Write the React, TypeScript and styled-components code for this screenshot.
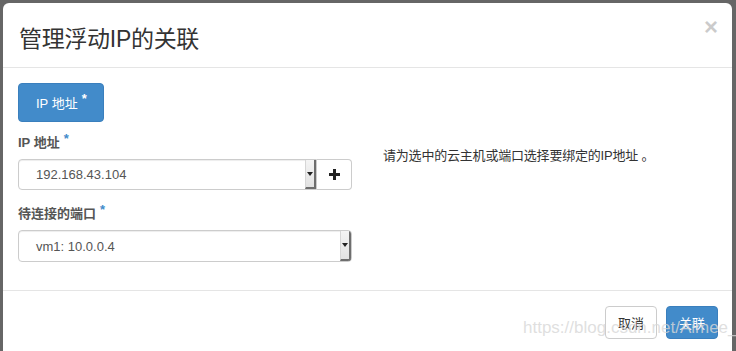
import styled, { createGlobalStyle } from 'styled-components'

const GlobalStyle = createGlobalStyle`
  html, body {
    margin: 0;
    padding: 0;
    background: #666;
    overflow: hidden;
  }
  body {
    font-family: "Liberation Sans", "Noto Sans CJK SC", sans-serif;
    font-size: 13px;
    color: #333;
  }
`

const Backdrop = styled.div`
  width: 736px;
  height: 351px;
  padding: 3px 4px 0 3px;
  box-sizing: border-box;
`

const Modal = styled.div`
  position: relative;
  height: 100%;
  background: #fff;
  border-radius: 6px 6px 0 0;
  display: flex;
  flex-direction: column;
`

const Header = styled.div`
  height: 64px;
  flex: none;
  display: flex;
  align-items: center;
  justify-content: space-between;
  padding: 0 14px 0 16px;
  border-bottom: 1px solid #e5e5e5;
`

const Title = styled.h4`
  margin: 0;
  font-size: 23px;
  font-weight: normal;
  color: #333;
  letter-spacing: -0.3px;
  padding-top: 4px;
`

const Close = styled.button`
  border: 0;
  background: none;
  padding: 0;
  font-family: "Liberation Sans", sans-serif;
  font-size: 24px;
  font-weight: bold;
  line-height: 1;
  color: #000;
  opacity: 0.2;
  margin-top: -16px;
`

const Body = styled.div`
  height: 223px;
  flex: none;
  padding: 15px 15px 0 15px;
  box-sizing: border-box;
  border-bottom: 1px solid #e5e5e5;
`

const Star = styled.span`
  color: #428bca;
  font-size: 13px;
  vertical-align: top;
  margin-left: 4px;
  font-weight: bold;
`

const TabButton = styled.button`
  height: 39px;
  padding: 0 16px 0 17px;
  border: 1px solid #3a7fbd;
  border-radius: 4px;
  background: #428bca;
  color: #fff;
  font-family: "Liberation Sans", "Noto Sans CJK SC", sans-serif;
  font-size: 13px;
  display: flex;
  align-items: center;
  ${Star} {
    color: #fff;
    margin-top: -8px;
  }
`

const Row = styled.div`
  display: flex;
  gap: 31px;
  margin-top: 13px;
`

const FormCol = styled.div`
  width: 334px;
  display: flex;
  flex-direction: column;
`

const Label = styled.label`
  display: block;
  font-weight: bold;
  color: #555;
  font-size: 13px;
  height: 16px;
  line-height: 16px;
  margin-bottom: 8px;
  ${Star} {
    display: inline-block;
    margin-top: -4px;
  }
`

const Group = styled.div<{ $gap?: number }>`
  margin-bottom: ${(p) => p.$gap ?? 0}px;
`

const InputGroup = styled.div`
  display: flex;
  height: 31px;
`

const Select = styled.div<{ $height: number; $joined?: boolean }>`
  flex: 1;
  height: ${(p) => p.$height}px;
  box-sizing: border-box;
  border: 1px solid #ccc;
  border-radius: ${(p) => (p.$joined ? '4px 0 0 4px' : '4px')};
  display: flex;
  align-items: stretch;
  overflow: hidden;
  box-shadow: inset 0 1px 1px rgba(0, 0, 0, 0.075);
`

const SelectValue = styled.div`
  flex: 1;
  display: flex;
  align-items: center;
  padding-left: 17px;
  color: #555;
  font-size: 13px;
`

const Arrow = styled.div`
  width: 11px;
  background: linear-gradient(#f4f4f4, #e2e2e2);
  border-left: 1px solid #d6d6d6;
  border-right: 2px solid #6e6e6e;
  border-bottom: 2px solid #6e6e6e;
  box-sizing: border-box;
  display: flex;
  align-items: center;
  justify-content: center;
  &::after {
    content: '';
    border-left: 3px solid transparent;
    border-right: 3px solid transparent;
    border-top: 4px solid #222;
  }
`

const AddButton = styled.button`
  width: 35px;
  height: 31px;
  box-sizing: border-box;
  border: 1px solid #ccc;
  border-left: 0;
  border-radius: 0 4px 4px 0;
  background: #fff;
  display: flex;
  align-items: center;
  justify-content: center;
  padding: 0;
`

const Help = styled.p`
  margin: 10px 0 0;
  font-size: 13px;
  color: #333;
  letter-spacing: -0.2px;
`

const Footer = styled.div`
  display: flex;
  justify-content: flex-end;
  gap: 9px;
  padding: 15px 14px 0 0;
`

const FooterButton = styled.button<{ $primary?: boolean }>`
  width: 52px;
  height: 33px;
  box-sizing: border-box;
  border-radius: 4px;
  font-family: "Noto Sans CJK SC", sans-serif;
  font-size: 13px;
  padding: 0;
  border: 1px solid ${(p) => (p.$primary ? '#3a7fbd' : '#ccc')};
  background: ${(p) => (p.$primary ? '#428bca' : '#fff')};
  color: ${(p) => (p.$primary ? '#fff' : '#333')};
`

const Watermark = styled.div`
  position: absolute;
  z-index: 2;
  left: 520px;
  top: 315px;
  font-family: "Liberation Sans", sans-serif;
  font-size: 17px;
  color: rgba(215, 215, 215, 0.8);
  pointer-events: none;
  white-space: nowrap;
`

const Plus = () => (
  <svg width="11" height="11" viewBox="0 0 11 11">
    <path d="M4 0h3v4h4v3H7v4H4V7H0V4h4z" fill="#222" />
  </svg>
)

export default function App() {
  return (
    <>
      <GlobalStyle />
      <Backdrop>
        <Modal>
          <Header>
            <Title>管理浮动IP的关联</Title>
            <Close>×</Close>
          </Header>
          <Body>
            <TabButton>
              IP 地址<Star>*</Star>
            </TabButton>
            <Row>
              <FormCol>
                <Group $gap={16}>
                  <Label>
                    IP 地址<Star>*</Star>
                  </Label>
                  <InputGroup>
                    <Select $height={31} $joined>
                      <SelectValue>192.168.43.104</SelectValue>
                      <Arrow />
                    </Select>
                    <AddButton>
                      <Plus />
                    </AddButton>
                  </InputGroup>
                </Group>
                <Group>
                  <Label>
                    待连接的端口<Star>*</Star>
                  </Label>
                  <Select $height={32}>
                    <SelectValue>vm1: 10.0.0.4</SelectValue>
                    <Arrow />
                  </Select>
                </Group>
              </FormCol>
              <Help>请为选中的云主机或端口选择要绑定的IP地址 。</Help>
            </Row>
          </Body>
          <Footer>
            <FooterButton>取消</FooterButton>
            <FooterButton $primary>关联</FooterButton>
          </Footer>
          <Watermark>https://blog.csdn.net/Aimee_c</Watermark>
        </Modal>
      </Backdrop>
    </>
  )
}
